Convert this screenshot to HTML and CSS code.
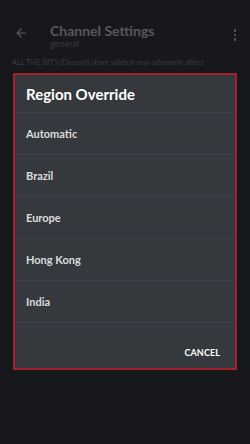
FILE: index.html
```html
<!DOCTYPE html>
<html lang="en">
<head>
    <meta charset="UTF-8">
    <meta name="viewport" content="width=device-width, initial-scale=1.0">
    <title>Channel Settings</title>
    <link rel="stylesheet" href="styles.css">
</head>
<body>
    <header class="topbar">
        <svg class="back" width="14" height="14" viewBox="0 0 24 24">
            <path d="M20 11H7.8l5.6-5.6L12 4l-8 8 8 8 1.4-1.4L7.8 13H20z" fill="currentColor"/>
        </svg>
        <div class="titles">
            <h1>Channel Settings</h1>
            <span class="sub">general</span>
        </div>
        <div class="kebab">
            <i></i><i></i><i></i>
        </div>
    </header>
    <p class="notice">ALL THE BITS (Discord) share sidebar may adversely affect</p>

    <!-- 弹出的地区选择框 -->
    <div class="dialog">
        <h2>Region Override</h2>
        <ul class="regions">
            <li>Automatic</li>
            <li>Brazil</li>
            <li>Europe</li>
            <li>Hong Kong</li>
            <li>India</li>
        </ul>
        <div class="actions">
            <button>CANCEL</button>
        </div>
    </div>
</body>
</html>
```

FILE: styles.css
```css
/* 重置默认样式 */
* {
    margin: 0;
    padding: 0;
    box-sizing: border-box;
}

body {
    width: 250px;
    height: 444px;
    background: #17181b;
    font-family: Lato, "Noto Sans", sans-serif;
    position: relative;
    overflow: hidden;
}

/* 顶部栏 */
.topbar {
    display: flex;
    align-items: flex-start;
    height: 52px;
    padding: 23px 12px 0 12px;
}

.back {
    color: #5b5d62;
    margin: 3px 0 0 2px;
}

.titles {
    flex: 1;
    margin-left: 22px;
    display: flex;
    flex-direction: column;
}

.titles h1 {
    font-size: 14px;
    font-weight: 700;
    color: #56585d;
    line-height: 16px;
}

.titles .sub {
    font-size: 9px;
    color: #3a3c40;
    line-height: 10px;
}

.kebab {
    display: flex;
    flex-direction: column;
    gap: 2px;
    margin: 6px 2px 0 0;
}

.kebab i {
    width: 2.5px;
    height: 2.5px;
    border-radius: 50%;
    background: #5b5d62;
}

.notice {
    font-size: 7.5px;
    color: #3a3c41;
    padding: 6px 12px;
    white-space: nowrap;
}

/* 地区弹窗 */
.dialog {
    position: absolute;
    left: 13px;
    top: 73px;
    width: 224px;
    height: 297px;
    background: #35383d;
    border: 2px solid #a51f2c;
    display: flex;
    flex-direction: column;
}

.dialog h2 {
    font-size: 15px;
    font-weight: 700;
    color: #ffffff;
    height: 38px;
    line-height: 38px;
    padding-left: 11px;
    border-bottom: 1px solid #3f4248;
}

.regions {
    list-style: none;
}

.regions li {
    height: 42px;
    line-height: 41px;
    padding-left: 11px;
    font-size: 11px;
    font-weight: 700;
    color: #dcddde;
    border-bottom: 1px solid #3d4046;
}

.actions {
    flex: 1;
    display: flex;
    justify-content: flex-end;
    align-items: flex-end;
    padding: 0 15px 10px 0;
}

.actions button {
    background: none;
    border: none;
    font-family: Lato, "Noto Sans", sans-serif;
    font-size: 9px;
    font-weight: 700;
    color: #ffffff;
    letter-spacing: 0.1px;
}
```
